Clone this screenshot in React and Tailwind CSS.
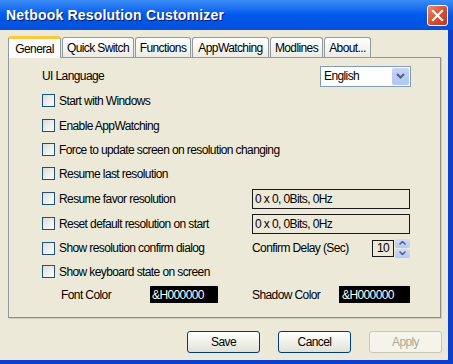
import React from "react";

const font = { fontFamily: '"Liberation Sans", Arial, sans-serif' };

const Checkbox = () => (
  <span className="w-[13px] h-[13px] shrink-0 border border-[#1c5180] bg-gradient-to-br from-[#dcdcd7] to-white" />
);

const CheckRow = ({ label, h, children }) => (
  <div className={`flex items-center ${h}`}>
    <div className="flex items-center w-[210px]">
      <Checkbox />
      <span className="ml-[4px] text-[12px] text-black whitespace-nowrap">{label}</span>
    </div>
    {children}
  </div>
);

const Field = ({ text }) => (
  <div className="w-[158px] h-[20px] border border-[#1a1a1a] flex items-center pl-[2px] text-[12px] text-black">
    {text}
  </div>
);

const tabs = ["Quick Switch", "Functions", "AppWatching", "Modlines", "About..."];
const tabWidths = ["w-[72px]", "w-[56px]", "w-[77px]", "w-[53px]", "w-[47px]"];

const Button = ({ label, disabled }) => (
  <button
    className={`w-[73px] h-[22px] rounded-[3px] border text-[12px] ${
      disabled
        ? "border-[#c9c7ba] text-[#aca899] bg-[#f5f4ea]"
        : "border-[#003c74] text-black bg-gradient-to-b from-white to-[#e3e1d6]"
    }`}
  >
    {label}
  </button>
);

export default function App() {
  return (
    <div className="w-[453px] h-[364px] flex flex-col bg-[#0a3fcf] overflow-hidden tracking-[-0.6px]" style={font}>
      {/* Title bar */}
      <div className="h-[30px] shrink-0 flex items-center justify-between pl-[6px] pr-[5px] bg-gradient-to-b from-[#3b8cf5] via-[#0058ee] to-[#0551d8]">
        <span className="text-white font-bold text-[14px] tracking-[0.2px] [text-shadow:1px_1px_0_#0a1a6a]">
          Netbook Resolution Customizer
        </span>
        <div className="w-[21px] h-[21px] rounded-[3px] border border-white bg-gradient-to-br from-[#e98d6e] via-[#d9502e] to-[#c0381c] flex items-center justify-center">
          <svg width="13" height="13" viewBox="0 0 13 13">
            <path d="M2 2 L11 11 M11 2 L2 11" stroke="white" strokeWidth="2.2" strokeLinecap="square" />
          </svg>
        </div>
      </div>

      <div className="flex flex-1">
        {/* Dialog body */}
        <div className="w-[448px] h-[330px] bg-[#ece9d8] pl-[8px] pt-[6px] flex flex-col">
          {/* Tabs */}
          <div className="flex items-end h-[21px]">
            <div className="relative z-10 w-[53px] h-[22px] -mb-[1px] bg-[#fcfcfe] border-x border-[#919b9c] rounded-t-[3px] border-t-[3px] border-t-[#ffc83c] flex items-center justify-center text-[12px] text-black">
              General
            </div>
            {tabs.map((t, i) => (
              <div
                key={t}
                className={`${tabWidths[i]} h-[20px] ml-[1px] bg-gradient-to-b from-white to-[#ecebe6] border border-b-0 border-[#919b9c] rounded-t-[3px] flex items-center justify-center text-[12px] text-black whitespace-nowrap`}
              >
                {t}
              </div>
            ))}
          </div>

          {/* Panel */}
          <div className="w-[433px] h-[261px] border border-[#919b9c] border-r-[#8a8f90] border-b-[#8a8f90] bg-[#ece9d8] shadow-[1px_1px_0_#d0cdbd] pl-[33px] pt-[6px] flex flex-col">
            <div className="flex items-center h-[24px]">
              <span className="w-[278px] text-[12px] text-black">UI Language</span>
              <div className="w-[91px] h-[21px] border border-[#7f9db9] bg-white flex items-center justify-between pl-[3px] pr-[1px]">
                <span className="text-[12px] text-black">English</span>
                <div className="w-[17px] h-[17px] rounded-[2px] bg-gradient-to-b from-[#c6d3f7] to-[#b1c5f5] flex items-center justify-center">
                  <svg width="9" height="6" viewBox="0 0 9 6">
                    <path d="M1 1 L4.5 4.5 L8 1" stroke="#4d6185" strokeWidth="2" fill="none" />
                  </svg>
                </div>
              </div>
            </div>

            <CheckRow label="Start with Windows" h="h-[25px]" />
            <CheckRow label="Enable AppWatching" h="h-[25px]" />
            <CheckRow label="Force to update screen on resolution changing" h="h-[23px]" />
            <CheckRow label="Resume last resolution" h="h-[25px]" />
            <CheckRow label="Resume favor resolution" h="h-[25px]">
              <Field text="0 x 0, 0Bits, 0Hz" />
            </CheckRow>
            <CheckRow label="Reset default resolution on start" h="h-[25px]">
              <Field text="0 x 0, 0Bits, 0Hz" />
            </CheckRow>
            <CheckRow label="Show resolution confirm dialog" h="h-[24px]">
              <span className="w-[120px] text-[12px] text-black whitespace-nowrap">Confirm Delay (Sec)</span>
              <div className="w-[22px] h-[17px] border border-[#1a1a1a] flex items-center justify-center text-[12px] text-black">
                10
              </div>
              <div className="ml-[1px] w-[15px] h-[19px] flex flex-col gap-[1px]">
                <div className="flex-1 rounded-[2px] bg-gradient-to-b from-[#d0dcf8] to-[#b4c8f5] flex items-center justify-center">
                  <svg width="7" height="4" viewBox="0 0 7 4">
                    <path d="M0.5 3.5 L3.5 0.5 L6.5 3.5" stroke="#4d6185" strokeWidth="1.5" fill="none" />
                  </svg>
                </div>
                <div className="flex-1 rounded-[2px] bg-gradient-to-b from-[#d0dcf8] to-[#b4c8f5] flex items-center justify-center">
                  <svg width="7" height="4" viewBox="0 0 7 4">
                    <path d="M0.5 0.5 L3.5 3.5 L6.5 0.5" stroke="#4d6185" strokeWidth="1.5" fill="none" />
                  </svg>
                </div>
              </div>
            </CheckRow>
            <CheckRow label="Show keyboard state on screen" h="h-[23px]" />

            <div className="flex items-center h-[23px] text-[12px] text-black">
              <span className="w-[108px] pl-[19px]">Font Color</span>
              <div className="w-[68px] h-[17px] bg-black text-white pl-[2px] flex items-center">&amp;H000000</div>
              <span className="ml-[34px] w-[87px]">Shadow Color</span>
              <div className="w-[71px] h-[17px] bg-black text-white pl-[3px] flex items-center">&amp;H000000</div>
            </div>
          </div>

          {/* Buttons */}
          <div className="flex gap-[18px] pl-[179px] pt-[13px]">
            <Button label="Save" />
            <Button label="Cancel" />
            <Button label="Apply" disabled />
          </div>
        </div>
      </div>
    </div>
  );
}
